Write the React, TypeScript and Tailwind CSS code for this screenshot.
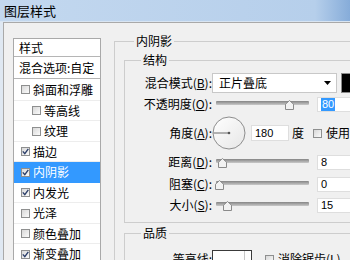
import React from "react";

const cjk = "font-['Noto_Sans_CJK_SC','Noto_Sans',sans-serif]";
const num = "font-['Liberation_Sans','Arial',sans-serif]";

function Box({ checked }: { checked?: boolean }) {
  return (
    <span className="flex h-[9px] w-[9px] shrink-0 items-center justify-center border border-[#8e8f8f] bg-gradient-to-br from-[#d8d8d8] to-[#fbfbfb]">
      {checked && (
        <svg width="7" height="7" viewBox="0 0 7 7">
          <path d="M0.8 3.4 L2.8 5.6 L6.3 0.9" stroke="#2c3f6a" strokeWidth="1.4" fill="none" />
        </svg>
      )}
    </span>
  );
}

const items = [
  { label: "斜面和浮雕", checked: false, indent: false, selected: false, h: "h-[22px]" },
  { label: "等高线", checked: false, indent: true, selected: false, h: "h-[20px]" },
  { label: "纹理", checked: false, indent: true, selected: false, h: "h-[21px]" },
  { label: "描边", checked: true, indent: false, selected: false, h: "h-[20px]" },
  { label: "内阴影", checked: true, indent: false, selected: true, h: "h-[21px]" },
  { label: "内发光", checked: true, indent: false, selected: false, h: "h-[20px]" },
  { label: "光泽", checked: false, indent: false, selected: false, h: "h-[21px]" },
  { label: "颜色叠加", checked: false, indent: false, selected: false, h: "h-[20px]" },
  { label: "渐变叠加", checked: true, indent: false, selected: false, h: "h-[21px]" },
];

function Slider({ pos }: { pos: number }) {
  return (
    <div className="relative ml-[4px] h-[20px] w-[93px] shrink-0">
      <div className="absolute left-0 right-0 top-[7px] h-[4px] rounded-[1px] bg-gradient-to-b from-[#858585] to-[#c9c9c9]" />
      <svg className="absolute top-[6px]" style={{ left: pos - 4.5 }} width="9" height="10" viewBox="0 0 9 10">
        <path d="M4.5 0.5 L8.5 4.2 L8.5 9.5 L0.5 9.5 L0.5 4.2 Z" fill="#f2f2f2" stroke="#8a8a8a" strokeWidth="1" />
      </svg>
    </div>
  );
}

function Label({ children }: { children: React.ReactNode }) {
  return <div className="w-[87px] shrink-0 text-right text-[12px] leading-[16px] text-black">{children}</div>;
}

function ValueBox({ value, selected }: { value: string; selected?: boolean }) {
  return (
    <div className={`ml-[8px] flex h-[15px] w-[40px] shrink-0 items-center border border-[#dedede] bg-white pl-[3px] text-[11px] text-black ${num}`}>
      {selected ? <span className="bg-[#3399ff] px-[1px] leading-[13px] text-white">{value}</span> : <span className="leading-[13px]">{value}</span>}
    </div>
  );
}

export default function App() {
  return (
    <div className={`relative h-[260px] w-[350px] overflow-hidden bg-[#dfe8f2] ${cjk}`}>
      <div className="flex h-[22px] items-center border-b border-[#d9e5f2] bg-gradient-to-r from-[#c3d8ef] via-[#b6cfeb] via-90% to-[#86acd9] pl-[4px] text-[13px] leading-[16px] text-black">
        图层样式
      </div>
      <div className="ml-[3px] flex h-[238px] border-l border-t border-[#a9a9a9] bg-[#f0f0f0]">
        {/* left list */}
        <div className="shrink-0 pl-[9px] pt-[15px]">
          <div className="w-[88px] border border-[#a9a9a9] bg-white text-[12px] leading-[16px] text-black">
            <div className="flex h-[18px] items-center border-b border-[#b5b5b5] pl-[5px]">样式</div>
            <div className="flex h-[22px] items-center border-b border-[#b5b5b5] pl-[5px]">混合选项:自定</div>
            {items.map((it) => (
              <div
                key={it.label}
                className={`flex items-center gap-[3px] border-b ${it.h} ${it.indent ? "pl-[18px]" : "pl-[7px]"} ${
                  it.selected ? "border-[#3399ff] bg-[#3399ff] text-white" : "border-[#ededed]"
                }`}
              >
                <Box checked={it.checked} />
                <span>{it.label}</span>
              </div>
            ))}
          </div>
        </div>

        {/* right side */}
        <div className="ml-[13px] mt-[18px] w-[300px] shrink-0">
          <div className="relative border-l border-t border-[#cdcdcd] pl-[9px] pt-[18px]">
            <span className="absolute left-[19px] top-[-9px] bg-[#f0f0f0] px-[2px] text-[12px] leading-[16px] text-black">内阴影</span>

            <div className="relative border-b border-l border-t border-[#cdcdcd] pb-[7px] pt-[12px]">
              <span className="absolute left-[16px] top-[-9px] bg-[#f0f0f0] px-[2px] text-[12px] leading-[16px] text-black">结构</span>

              {/* blend mode */}
              <div className="flex h-[20px] items-center">
                <Label>
                  混合模式(<span className="underline">B</span>):
                </Label>
                <div className="flex h-[20px] w-[125px] shrink-0 items-center justify-between border border-[#c8c8c8] bg-white pl-[6px] pr-[5px] text-[12px] leading-[16px] text-black">
                  <span>正片叠底</span>
                  <svg width="7" height="4" viewBox="0 0 7 4">
                    <path d="M0 0 L7 0 L3.5 4 Z" fill="#000" />
                  </svg>
                </div>
                <div className="ml-[4px] h-[20px] w-[16px] shrink-0 border border-[#8a8a8a] bg-black" />
              </div>

              {/* opacity */}
              <div className="mt-[1px] flex h-[20px] items-center">
                <Label>
                  不透明度(<span className="underline">O</span>):
                </Label>
                <Slider pos={73} />
                <ValueBox value="80" selected />
              </div>

              {/* angle */}
              <div className="mt-[2px] flex h-[34px] items-center">
                <Label>
                  角度(<span className="underline">A</span>):
                </Label>
                <svg width="34" height="34" viewBox="0 0 34 34" className="shrink-0">
                  <defs>
                    <linearGradient id="dialg" x1="0" y1="0" x2="1" y2="1">
                      <stop offset="0" stopColor="#ffffff" />
                      <stop offset="1" stopColor="#e6e6e6" />
                    </linearGradient>
                  </defs>
                  <circle cx="17" cy="17" r="16" fill="url(#dialg)" stroke="#8d8d8d" strokeWidth="1" />
                  <line x1="17" y1="17" x2="1.5" y2="17" stroke="#6b6b6b" strokeWidth="1" />
                  <circle cx="17" cy="17" r="1.3" fill="#555" />
                </svg>
                <div className={`ml-[5px] flex h-[16px] w-[38px] shrink-0 items-center border border-[#dedede] bg-white pl-[3px] text-[11px] leading-[13px] text-black ${num}`}>
                  180
                </div>
                <span className="ml-[3px] text-[12px] leading-[16px] text-black">度</span>
                <span className="ml-[9px]">
                  <Box />
                </span>
                <span className="ml-[4px] whitespace-nowrap text-[12px] leading-[16px] text-black">
                  使用全局光(<span className="underline">G</span>)
                </span>
              </div>

              {/* distance */}
              <div className="mt-[2px] flex h-[20px] items-center">
                <Label>
                  距离(<span className="underline">D</span>):
                </Label>
                <Slider pos={6} />
                <ValueBox value="8" />
              </div>

              {/* choke */}
              <div className="mt-[2px] flex h-[20px] items-center">
                <Label>
                  阻塞(<span className="underline">C</span>):
                </Label>
                <Slider pos={3} />
                <ValueBox value="0" />
              </div>

              {/* size */}
              <div className="mt-[1px] flex h-[20px] items-center">
                <Label>
                  大小(<span className="underline">S</span>):
                </Label>
                <Slider pos={11} />
                <ValueBox value="15" />
              </div>
            </div>

            <div className="relative mt-[10px] border-l border-t border-[#cdcdcd] pt-[16px]">
              <span className="absolute left-[16px] top-[-9px] bg-[#f0f0f0] px-[2px] text-[12px] leading-[16px] text-black">品质</span>
              <div className="flex items-start">
                <div className="pt-[1px]">
                  <Label>等高线:</Label>
                </div>
                <div className="relative h-[30px] w-[40px] shrink-0 border border-[#3a3a3a] bg-white">
                  <svg width="38" height="28" viewBox="0 0 38 28" className="block">
                    <path d="M22 28 L30 20 L30 28 Z" fill="#b5b5b5" />
                    <line x1="31.5" y1="0" x2="31.5" y2="28" stroke="#c8c8c8" />
                  </svg>
                </div>
                <div className="ml-[13px] flex h-[18px] items-center gap-[4px]">
                  <Box />
                  <span className="whitespace-nowrap text-[12px] leading-[16px] text-black">
                    消除锯齿(<span className="underline">L</span>)
                  </span>
                </div>
              </div>
            </div>
          </div>
        </div>
      </div>
    </div>
  );
}
